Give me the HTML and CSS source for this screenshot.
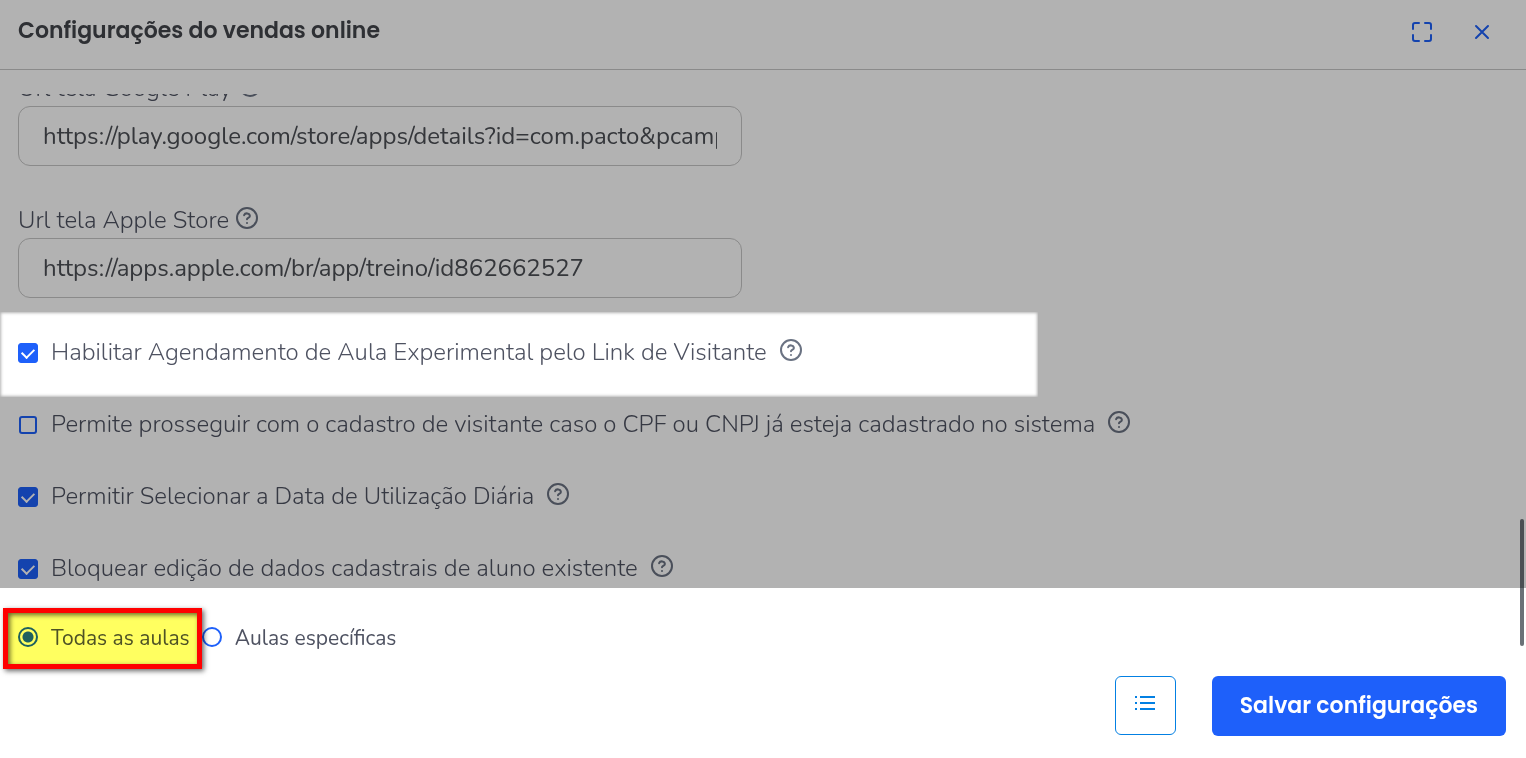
FILE: index.html
```html
<!DOCTYPE html>
<html lang="pt-BR">
<head>
    <meta charset="UTF-8">
    <title>Configurações do vendas online</title>
    <link rel="stylesheet" href="styles.css">
</head>
<body>
    <svg class="sprite" aria-hidden="true">
        <symbol id="help" viewBox="0 0 24 24">
            <circle cx="12" cy="12" r="10"/>
            <path d="M9.1 9.2a3 2.8 0 0 1 5.8 .8c0 1.8-2.9 2-2.9 3.2"/>
            <path d="M12 17h.01"/>
        </symbol>
    </svg>

    <div class="modal">
        <div class="top">
            <header class="header">
                <h1>Configurações do vendas online</h1>
                <div class="tools">
                    <button type="button" aria-label="Tela cheia">
                        <svg class="icon" viewBox="0 0 24 24"><path d="M9 3H5a2 2 0 0 0-2 2v4M21 9V5a2 2 0 0 0-2-2h-4M15 21h4a2 2 0 0 0 2-2v-4M3 15v4a2 2 0 0 0 2 2h4"/></svg>
                    </button>
                    <button type="button" aria-label="Fechar">
                        <svg class="icon" viewBox="0 0 24 24"><path d="M18 6L6 18M6 6l12 12"/></svg>
                    </button>
                </div>
            </header>

            <div class="scroll">
                <div class="fields">
                    <div class="field">
                        <label for="google">Url tela Google Play <svg class="help"><use href="#help"/></svg></label>
                        <input type="text" id="google" value="https://play.google.com/store/apps/details?id=com.pacto&amp;pcampaignid=web_share">
                    </div>
                    <div class="field">
                        <label for="apple">Url tela Apple Store <svg class="help"><use href="#help"/></svg></label>
                        <input type="text" id="apple" value="https://apps.apple.com/br/app/treino/id862662527">
                    </div>
                </div>
                <ul class="options">
                    <li>
                        <input type="checkbox" id="agenda" checked>
                        <label for="agenda">Habilitar Agendamento de Aula Experimental pelo Link de Visitante</label>
                        <svg class="help"><use href="#help"/></svg>
                    </li>
                    <li>
                        <input type="checkbox" id="cadastro">
                        <label for="cadastro">Permite prosseguir com o cadastro de visitante caso o CPF ou CNPJ já esteja cadastrado no sistema</label>
                        <svg class="help"><use href="#help"/></svg>
                    </li>
                    <li>
                        <input type="checkbox" id="diaria" checked>
                        <label for="diaria">Permitir Selecionar a Data de Utilização Diária</label>
                        <svg class="help"><use href="#help"/></svg>
                    </li>
                    <li>
                        <input type="checkbox" id="bloquear" checked>
                        <label for="bloquear">Bloquear edição de dados cadastrais de aluno existente</label>
                        <svg class="help"><use href="#help"/></svg>
                    </li>
                </ul>
            </div>
            <div class="spotlight"></div>
        </div>

        <div class="aulas">
            <div class="choice">
                <input type="radio" name="aulas" id="todas" checked>
                <label for="todas">Todas as aulas</label>
                <span class="marker"></span>
            </div>
            <div class="choice">
                <input type="radio" name="aulas" id="especificas">
                <label for="especificas">Aulas específicas</label>
            </div>
        </div>

        <footer class="footer">
            <button type="button" class="log" aria-label="Histórico">
                <svg viewBox="0 0 20 16"><path d="M5 2h15M5 8h15M5 14h15M0 2h2M0 8h2M0 14h2"/></svg>
            </button>
            <button type="button" class="save">Salvar configurações</button>
        </footer>
        <div class="thumb"></div>
    </div>
</body>
</html>
```
FILE: styles.css
```css
*{
    margin: 0;
    padding: 0;
    list-style: none;
    box-sizing: border-box;
}
body{
    background: #fff;
    color: #4e5261;
    font: 300 24px/32px Nunito, "Noto Sans", sans-serif;
}
button{
    border: none;
    background: none;
    cursor: pointer;
}
.sprite{
    display: none;
}
.modal{
    position: relative;
}
.top{
    position: relative;
    height: 588px;
    overflow: hidden;
}
.header{
    display: flex;
    justify-content: space-between;
    align-items: center;
    height: 70px;
    padding: 0 32px 8px 18px;
    border-bottom: 1px solid #c6c6c6;
}
h1{
    color: #43454b;
    font: 600 22px/32px Poppins, Inter, sans-serif;
}
.tools{
    display: flex;
    gap: 36px;
    padding-top: 2px;
}
.tools button{
    width: 24px;
    height: 24px;
}
.icon{
    display: block;
    width: 24px;
    height: 24px;
    fill: none;
    stroke: #1e60fa;
    stroke-width: 2;
    stroke-linecap: round;
    stroke-linejoin: round;
}
.help{
    flex: none;
    width: 24px;
    height: 24px;
    fill: none;
    stroke: #6a7282;
    stroke-width: 2;
    stroke-linecap: round;
    stroke-linejoin: round;
}
/* list scrolled down, first label half hidden */
.scroll{
    margin-top: 24px;
    padding: 0 18px;
    overflow: hidden;
}
.fields{
    display: flex;
    flex-direction: column;
    gap: 36px;
    max-width: 760px;
    margin-top: -24px;
    padding-right: 36px;
}
.field label{
    display: flex;
    align-items: center;
    gap: 6px;
    height: 36px;
}
.field input{
    display: block;
    width: 100%;
    height: 60px;
    padding: 0 24px;
    border: 1px solid #c6c6c6;
    border-radius: 12px;
    background: #fff;
    color: #4c4f55;
    font: inherit;
    font-weight: 400;
}
.options{
    margin-top: 18px;
}
.options li{
    display: flex;
    align-items: center;
    height: 72px;
}
.field .help{
    margin-bottom: 4px;
}
.options .help{
    margin: 0 0 4px 12px;
}
input[type="checkbox"],
input[type="radio"]{
    appearance: none;
    flex: none;
    width: 20px;
    height: 20px;
    margin-right: 13px;
}
input[type="checkbox"]{
    margin-top: 2px;
    border: 1px solid transparent;
    border-radius: 4px;
    box-shadow: inset 0 0 0 2px #1e60fa;
}
input[type="checkbox"]:checked{
    border-color: #1e60fa;
    border-radius: 3px;
    background: #1e60fa;
}
input[type="checkbox"]:checked::before{
    content: "";
    display: block;
    width: 6px;
    height: 10px;
    margin: 2px auto;
    border: solid #fff;
    border-width: 0 2px 2px 0;
    transform: rotate(45deg);
}
/* dark veil around the highlighted option */
.spotlight{
    position: absolute;
    z-index: 2;
    top: 312px;
    left: 0;
    width: 1038px;
    height: 85px;
    box-shadow: 0 0 0 2000px rgba(0,0,0,.3), inset 0 0 3px 1px rgba(0,0,0,.3);
    pointer-events: none;
}
.aulas{
    display: flex;
    gap: 12px;
    padding: 34px 18px 22px;
    font-size: 21px;
    font-weight: 400;
}
.choice{
    position: relative;
    display: flex;
    align-items: center;
}
input[type="radio"]{
    margin-bottom: 2px;
    border: 2px solid #1e60fa;
    border-radius: 50%;
}
input[type="radio"]:checked{
    background: radial-gradient(circle, #1e60fa 5px, transparent 6px);
}
.marker{
    position: absolute;
    z-index: 1;
    top: -14px;
    right: -12px;
    bottom: -15px;
    left: -15px;
    border: 5px solid #f00;
    background: #ffff60;
    box-shadow: 2px 2px 5px rgba(0,0,0,.6), inset 2px 2px 5px rgba(0,0,0,.6);
    mix-blend-mode: multiply;
    pointer-events: none;
}
.footer{
    display: flex;
    justify-content: flex-end;
    gap: 36px;
    padding: 0 20px 22px;
}
.log{
    width: 61px;
    height: 59px;
    border: 1px solid #0380e3;
    border-radius: 6px;
}
.log svg{
    width: 20px;
    height: 16px;
    margin-bottom: 2px;
    fill: none;
    stroke: #0380e3;
    stroke-width: 2;
}
.save{
    height: 60px;
    padding: 0 28px;
    border-radius: 6px;
    background: #1e60fa;
    color: #fff;
    font: 600 22px/32px Poppins, Inter, sans-serif;
}
.thumb{
    position: absolute;
    z-index: 1;
    top: 519px;
    right: 2px;
    width: 4px;
    height: 127px;
    border-radius: 2px;
    background: #6b7177;
}
```
